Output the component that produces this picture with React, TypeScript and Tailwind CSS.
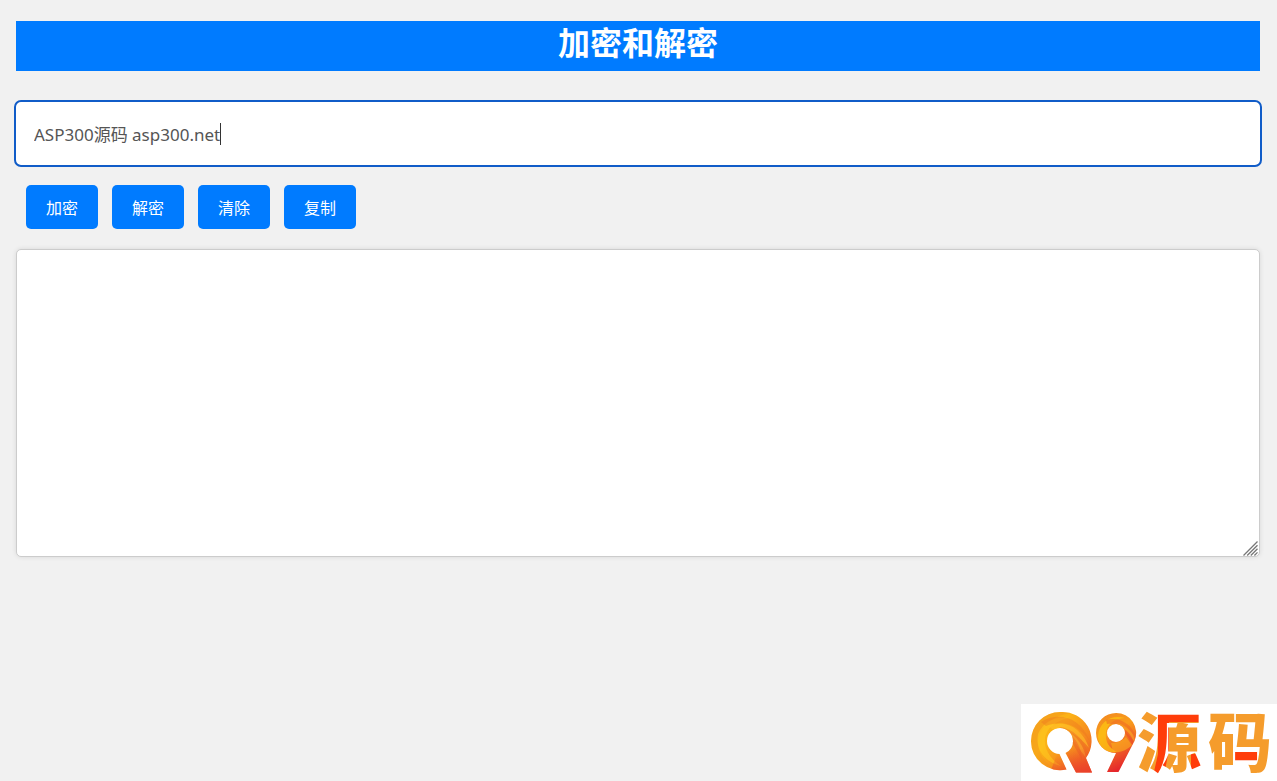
import { useRef, useState } from "react";

const BUTTON =
  "h-11 rounded-[5px] bg-[#007bff] px-5 pt-0.5 text-base leading-6 text-white hover:bg-[#0069d9]";

function Logo() {
  return (
    <svg viewBox="0 0 256 77" className="block h-[77px] w-64" role="img" aria-label="Q9源码">
      <defs>
        <linearGradient id="ring" x1="0" y1="0.1" x2="1" y2="0.95">
          <stop offset="0" stopColor="#f6a81c" />
          <stop offset="0.35" stopColor="#fcb316" />
          <stop offset="0.65" stopColor="#f58a1f" />
          <stop offset="1" stopColor="#ea4329" />
        </linearGradient>
        <linearGradient id="tail" x1="0" y1="0" x2="0.35" y2="1">
          <stop offset="0" stopColor="#f08322" />
          <stop offset="0.4" stopColor="#f99d1c" />
          <stop offset="0.7" stopColor="#ef6426" />
          <stop offset="1" stopColor="#e5262b" />
        </linearGradient>
        <linearGradient id="foot" x1="0" y1="0" x2="0" y2="1">
          <stop offset="0" stopColor="#ee4a2a" stopOpacity="0" />
          <stop offset="1" stopColor="#ea3f2b" />
        </linearGradient>
        <clipPath id="ringClip">
          <path d="M45.500 65.500A29 29 0 0 1 10 37A29 29 0 0 1 39 8A29 29 0 0 1 65 54L71 68.500H55L44.500 49A13 13 0 0 0 52 37A13 13 0 0 0 26 37A13 13 0 0 0 38.500 50Z" />
        </clipPath>
        <clipPath id="tailClip">
          <path
            clipRule="evenodd"
            d="M95 9A20 20 0 0 1 113.500 37L97.500 68H86L95 49A20 20 0 0 1 95 9ZM95 20A9 9 0 1 0 95 38A9 9 0 1 0 95 20Z"
          />
        </clipPath>
        <pattern id="twoTone" patternUnits="userSpaceOnUse" width="256" height="77">
          <rect width="256" height="77" fill="#f59c2c" />
          <path d="M137 8H184V18H148V45L143 72H132L137 50Z" fill="#ff3d0a" />
          <path d="M170 50H186V72H170Z" fill="#ff3d0a" />
          <path d="M213 47H236V59H213Z" fill="#ff3d0a" />
        </pattern>
      </defs>
      <g clipPath="url(#ringClip)">
        <rect x="8" y="5" width="66" height="66" fill="url(#ring)" />
        <path d="M10 26C16 12 32 4 50 9C30 12 18 24 17 38C17 50 24 60 36 66C18 62 6 46 10 26Z" fill="#f08a20" opacity="0.3" />
        <path d="M17 30C22 18 34 12 48 14C34 17 26 24 24 34C23 44 28 54 40 62C24 58 14 46 17 30Z" fill="#ffcf1f" opacity="0.5" />
        <path d="M20 18C38 7 60 14 68 36C58 22 42 15 25 22Z" fill="#ee7422" opacity="0.4" />
        <path d="M28 22C46 15 62 26 68 44C58 31 46 24 31 25Z" fill="#ffc02a" opacity="0.6" />
        <path d="M38 23C52 24 64 36 67 50C59 38 52 31 43 26Z" fill="#ed6d25" opacity="0.45" />
        <path d="M45 26C56 32 63 42 65 54C59 46 54 38 48 30Z" fill="#fbb034" opacity="0.5" />
        <path d="M50 31C58 38 61 48 61 56C58 50 54 44 51 38Z" fill="#ea5a27" opacity="0.45" />
        <path d="M44 46L66 44L72 70H54Z" fill="url(#foot)" />
        <path d="M30 66L36 50L42 50L48 68Z" fill="url(#foot)" opacity="0.6" />
      </g>
      <g clipPath="url(#tailClip)">
        <rect x="73" y="7" width="45" height="63" fill="url(#tail)" />
        <path d="M77 32C78 18 90 10 104 14C92 15 87 20 85 28C84 38 88 44 96 48C86 50 77 44 77 32Z" fill="#fdc60f" opacity="0.7" />
        <path d="M85 16C98 12 111 20 115 33C106 24 98 19 86 20Z" fill="#ee6125" opacity="0.5" />
        <path d="M96 19C106 21 114 30 114 38C108 31 104 27 100 23Z" fill="#fba924" opacity="0.55" />
        <path d="M103 25C109 29 113 35 112 41C109 36 106 32 104 29Z" fill="#e9472a" opacity="0.55" />
        <path d="M90 39C97 39 102 36 105 33L111 41C105 47 98 49 92 48Z" fill="#fbb01c" opacity="0.6" />
      </g>
      <text
        y="62"
        fontSize="64"
        fontWeight="900"
        fontFamily="'Liberation Sans', 'Noto Sans CJK SC', sans-serif"
        fill="url(#twoTone)"
      >
        <tspan x="116">源</tspan>
        <tspan x="187">码</tspan>
      </text>
    </svg>
  );
}

export default function App() {
  const [source, setSource] = useState("ASP300源码 asp300.net");
  const [result, setResult] = useState("");
  const output = useRef<HTMLTextAreaElement>(null);

  const encode = () => setResult(btoa(encodeURIComponent(source)));
  const decode = () => {
    try {
      setResult(decodeURIComponent(atob(source)));
    } catch {
      setResult("");
    }
  };
  const clear = () => {
    setSource("");
    setResult("");
  };
  const copy = () => {
    output.current?.select();
    navigator.clipboard?.writeText(result);
  };

  return (
    <div className="min-h-screen bg-[#f1f1f1] pt-[21px] pr-[17px] pb-4 pl-4 font-['Noto_Sans','Noto_Sans_CJK_SC',sans-serif]">
      <h1 className="h-[50px] bg-[#007bff] text-center text-[32px] leading-[44px] font-bold text-white">
        加密和解密
      </h1>

      <div className="relative mt-[31px]">
        <input
          type="text"
          aria-label="加密和解密"
          value={source}
          onChange={(e) => setSource(e.target.value)}
          className="block h-[63px] w-full rounded-[5px] bg-white px-[18px] text-[17px] text-[#555] caret-transparent outline-2 outline-[#105cc8]"
        />
        <div
          aria-hidden="true"
          className="pointer-events-none absolute inset-y-0 left-[18px] flex items-center text-[17px]"
        >
          <span className="invisible whitespace-pre">{source}</span>
          <span className="h-[22px] w-px bg-[#333]" />
        </div>
      </div>

      <div className="mt-5 flex flex-wrap gap-[14px] px-[10px]">
        <button type="button" onClick={encode} className={BUTTON}>加密</button>
        <button type="button" onClick={decode} className={BUTTON}>解密</button>
        <button type="button" onClick={clear} className={BUTTON}>清除</button>
        <button type="button" onClick={copy} className={BUTTON}>复制</button>
      </div>

      <div className="relative mt-5">
        <textarea
          ref={output}
          aria-label="复制"
          value={result}
          onChange={(e) => setResult(e.target.value)}
          className="block h-[308px] w-full resize-none rounded-[5px] border border-[#ccc] bg-white p-4 text-[17px] text-[#555] shadow-[0_0_5px_rgba(0,0,0,0.1)] outline-none"
        />
        <svg viewBox="0 0 15 15" aria-hidden="true" className="pointer-events-none absolute right-0.5 bottom-px size-[15px]">
          <path d="M0.500 14.500L14.500 0.500M4.200 14.500L14.500 4.200M7.800 14.500L14.500 7.800M11.400 14.500L14.500 11.400" fill="none" stroke="#777" strokeWidth="1.3" />
        </svg>
      </div>

      <div className="fixed right-0 bottom-0 bg-white">
        <Logo />
      </div>
    </div>
  );
}
